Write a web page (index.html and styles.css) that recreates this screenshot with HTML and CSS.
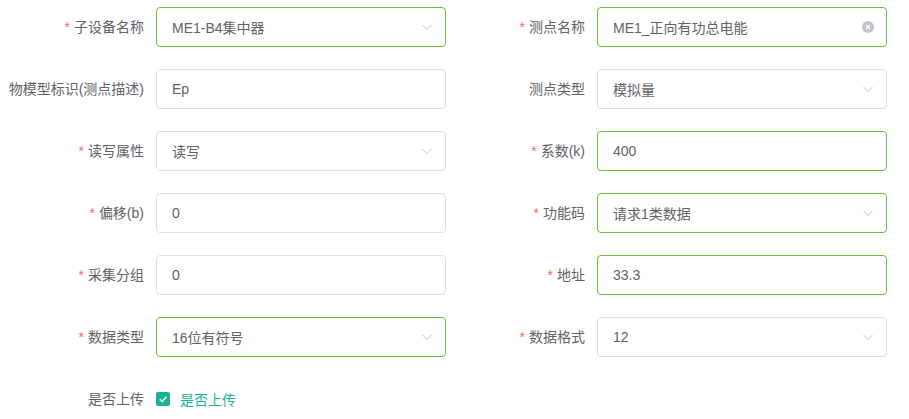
FILE: index.html
```html
<!DOCTYPE html>
<html lang="zh">
<head>
<meta charset="utf-8">
<link rel="stylesheet" href="styles.css">
</head>
<body>
<form class="form">
  <div class="item">
    <label class="label"><span class="req">*</span>子设备名称</label>
    <div class="input ok select"><span class="val">ME1-B4集中器</span><svg class="arrow" viewBox="0 0 14 14"><path d="M2.5 5 L7 9.5 L11.5 5" fill="none" stroke="#c0c4cc" stroke-width="1"/></svg></div>
  </div>
  <div class="item">
    <label class="label"><span class="req">*</span>测点名称</label>
    <div class="input ok"><span class="val">ME1_正向有功总电能</span><svg class="clear" viewBox="0 0 14 14"><circle cx="7" cy="7" r="6" fill="#c0c4cc"/><path d="M5 5 L9 9 M9 5 L5 9" stroke="#fff" stroke-width="1.2"/></svg></div>
  </div>
  <div class="item">
    <label class="label">物模型标识(测点描述)</label>
    <div class="input"><span class="val">Ep</span></div>
  </div>
  <div class="item">
    <label class="label">测点类型</label>
    <div class="input select"><span class="val">模拟量</span><svg class="arrow" viewBox="0 0 14 14"><path d="M2.5 5 L7 9.5 L11.5 5" fill="none" stroke="#c0c4cc" stroke-width="1"/></svg></div>
  </div>
  <div class="item">
    <label class="label"><span class="req">*</span>读写属性</label>
    <div class="input select"><span class="val">读写</span><svg class="arrow" viewBox="0 0 14 14"><path d="M2.5 5 L7 9.5 L11.5 5" fill="none" stroke="#c0c4cc" stroke-width="1"/></svg></div>
  </div>
  <div class="item">
    <label class="label"><span class="req">*</span>系数(k)</label>
    <div class="input ok"><span class="val">400</span></div>
  </div>
  <div class="item">
    <label class="label"><span class="req">*</span>偏移(b)</label>
    <div class="input"><span class="val">0</span></div>
  </div>
  <div class="item">
    <label class="label"><span class="req">*</span>功能码</label>
    <div class="input ok select"><span class="val">请求1类数据</span><svg class="arrow" viewBox="0 0 14 14"><path d="M2.5 5 L7 9.5 L11.5 5" fill="none" stroke="#c0c4cc" stroke-width="1"/></svg></div>
  </div>
  <div class="item">
    <label class="label"><span class="req">*</span>采集分组</label>
    <div class="input"><span class="val">0</span></div>
  </div>
  <div class="item">
    <label class="label"><span class="req">*</span>地址</label>
    <div class="input ok"><span class="val">33.3</span></div>
  </div>
  <div class="item">
    <label class="label"><span class="req">*</span>数据类型</label>
    <div class="input ok select"><span class="val">16位有符号</span><svg class="arrow" viewBox="0 0 14 14"><path d="M2.5 5 L7 9.5 L11.5 5" fill="none" stroke="#c0c4cc" stroke-width="1"/></svg></div>
  </div>
  <div class="item">
    <label class="label"><span class="req">*</span>数据格式</label>
    <div class="input select"><span class="val">12</span><svg class="arrow" viewBox="0 0 14 14"><path d="M2.5 5 L7 9.5 L11.5 5" fill="none" stroke="#c0c4cc" stroke-width="1"/></svg></div>
  </div>
  <div class="item">
    <label class="label">是否上传</label>
    <div class="check">
      <span class="box"><svg viewBox="0 0 14 14"><path d="M3.8 7.2 L6.2 9.4 L10.4 4.8" fill="none" stroke="#fff" stroke-width="1.4"/></svg></span>
      <span class="check-text">是否上传</span>
    </div>
  </div>
</form>
</body>
</html>
```
FILE: styles.css
```css
html, body {
  margin: 0;
  padding: 0;
  background: #fff;
}
body {
  font-family: "Liberation Sans", "Noto Sans CJK SC", sans-serif;
  font-size: 14px;
  color: #606266;
}
.form {
  display: grid;
  grid-template-columns: 440px 440px;
  column-gap: 1px;
  row-gap: 22px;
  padding: 7px 0 0 6px;
}
.item {
  display: flex;
  align-items: center;
  height: 40px;
}
.label {
  width: 150px;
  flex: none;
  box-sizing: border-box;
  padding-right: 12px;
  text-align: right;
  color: #606266;
  line-height: 40px;
  white-space: nowrap;
}
.req {
  color: #f56c6c;
  margin-right: 4px;
}
.input {
  flex: 1;
  height: 40px;
  box-sizing: border-box;
  border: 1px solid #dcdfe6;
  border-radius: 4px;
  padding: 0 15px;
  display: flex;
  align-items: center;
  justify-content: space-between;
  color: #606266;
}
.input.ok {
  border-color: #67c23a;
}
.val {
  white-space: nowrap;
}
.arrow {
  width: 14px;
  height: 14px;
  margin-right: -4px;
}
.clear {
  width: 14px;
  height: 14px;
  margin-right: -4px;
}
.check {
  display: flex;
  align-items: center;
}
.box {
  width: 14px;
  height: 14px;
  border-radius: 2px;
  background: #1ab394;
  display: flex;
}
.box svg {
  width: 14px;
  height: 14px;
}
.check-text {
  margin-left: 10px;
  color: #1ab394;
}
```
